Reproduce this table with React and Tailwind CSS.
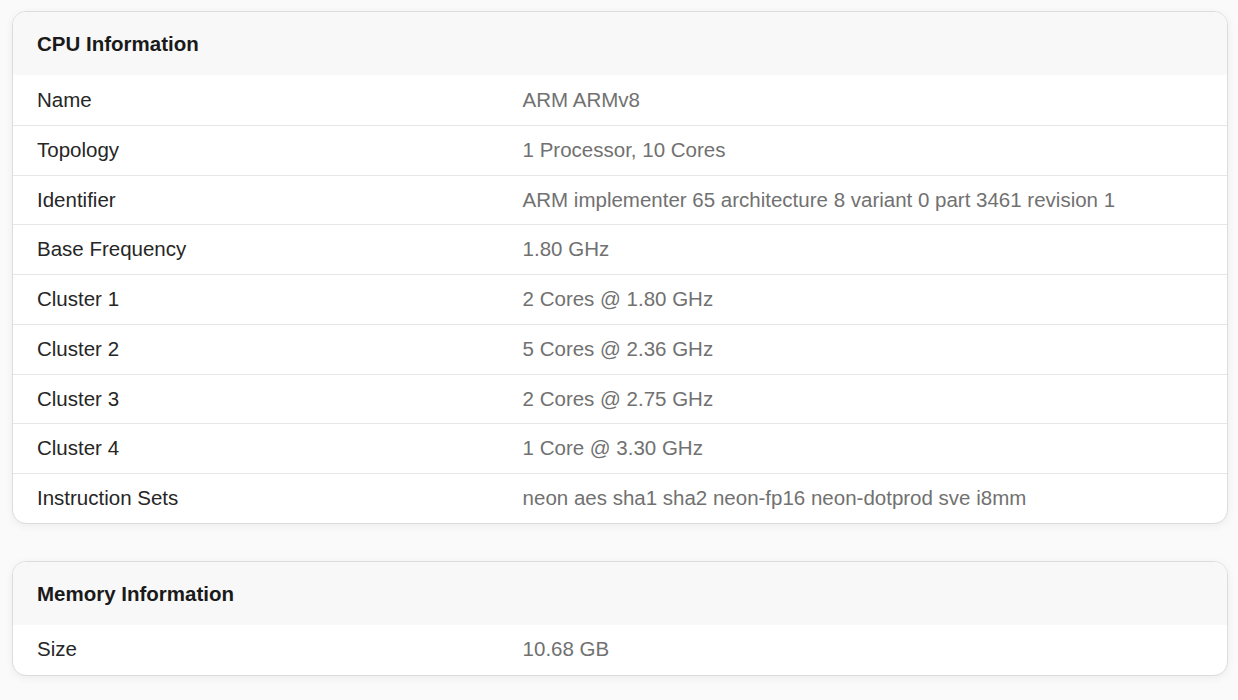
import React from 'react';

const cpuRows = [
  ['Name', 'ARM ARMv8'],
  ['Topology', '1 Processor, 10 Cores'],
  ['Identifier', 'ARM implementer 65 architecture 8 variant 0 part 3461 revision 1'],
  ['Base Frequency', '1.80 GHz'],
  ['Cluster 1', '2 Cores @ 1.80 GHz'],
  ['Cluster 2', '5 Cores @ 2.36 GHz'],
  ['Cluster 3', '2 Cores @ 2.75 GHz'],
  ['Cluster 4', '1 Core @ 3.30 GHz'],
  ['Instruction Sets', 'neon aes sha1 sha2 neon-fp16 neon-dotprod sve i8mm'],
];

const memoryRows = [['Size', '10.68 GB']];

const InfoCard = ({ title, rows }) => (
  <div className="rounded-[14px] border border-[#dcdcdc] bg-white shadow-[0_2px_8px_rgba(0,0,0,0.06)] overflow-hidden">
    <div className="bg-[#f8f8f8] px-6 pt-[2px] h-[63px] flex items-center">
      <h2 className="text-[20.5px] font-bold text-[#1a1a1a]">{title}</h2>
    </div>
    {rows.map(([label, value], i) => (
      <div
        key={label}
        className={`flex h-[49.75px] items-center text-[20.5px] ${i > 0 ? 'border-t border-[#e6e6e6]' : ''}`}
      >
        <div className="w-[40%] px-6 text-[#262626]">{label}</div>
        <div className="w-[60%] px-6 text-[#717171]">{value}</div>
      </div>
    ))}
  </div>
);

export default function App() {
  return (
    <div
      className="min-h-[700px] bg-[#fafafa] pl-3 pr-[10px] pt-[11px] flex flex-col gap-[37px]"
      style={{ fontFamily: '"Liberation Sans", Arial, sans-serif' }}
    >
      <InfoCard title="CPU Information" rows={cpuRows} />
      <InfoCard title="Memory Information" rows={memoryRows} />
    </div>
  );
}
